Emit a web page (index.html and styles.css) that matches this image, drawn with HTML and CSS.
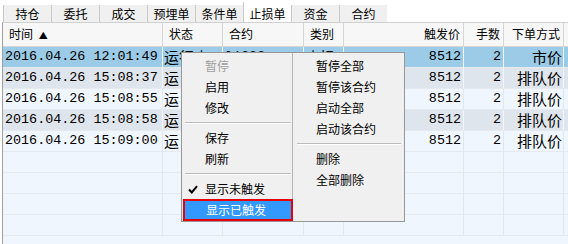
FILE: index.html
```html
<!DOCTYPE html>
<html lang="zh-CN">
<head>
  <meta charset="UTF-8">
  <link rel="stylesheet" href="styles.css">
  <title>止损单</title>
</head>
<body>
  <nav class="tabs">
    <div class="tab">持仓</div>
    <div class="tab">委托</div>
    <div class="tab">成交</div>
    <div class="tab">预埋单</div>
    <div class="tab">条件单</div>
    <div class="tab active">止损单</div>
    <div class="tab">资金</div>
    <div class="tab">合约</div>
  </nav>

  <div class="table">
    <div class="row head">
      <div class="cell">时间 <span class="sort">▲</span></div>
      <div class="cell">状态</div>
      <div class="cell">合约</div>
      <div class="cell">类别</div>
      <div class="cell num">触发价</div>
      <div class="cell num">手数</div>
      <div class="cell num">下单方式</div>
      <div class="cell"></div>
    </div>
    <div class="row selected">
      <div class="cell">2016.04.26 12:01:49</div>
      <div class="cell cjk">运行中</div>
      <div class="cell">l1609</div>
      <div class="cell cjk">止损</div>
      <div class="cell num">8512</div>
      <div class="cell num">2</div>
      <div class="cell num cjk">市价</div>
      <div class="cell"></div>
    </div>
    <div class="row even">
      <div class="cell">2016.04.26 15:08:37</div>
      <div class="cell cjk">运</div>
      <div class="cell"></div>
      <div class="cell"></div>
      <div class="cell num">8512</div>
      <div class="cell num">2</div>
      <div class="cell num cjk">排队价</div>
      <div class="cell"></div>
    </div>
    <div class="row">
      <div class="cell">2016.04.26 15:08:55</div>
      <div class="cell cjk">运</div>
      <div class="cell"></div>
      <div class="cell"></div>
      <div class="cell num">8512</div>
      <div class="cell num">2</div>
      <div class="cell num cjk">排队价</div>
      <div class="cell"></div>
    </div>
    <div class="row even">
      <div class="cell">2016.04.26 15:08:58</div>
      <div class="cell cjk">运</div>
      <div class="cell"></div>
      <div class="cell"></div>
      <div class="cell num">8512</div>
      <div class="cell num">2</div>
      <div class="cell num cjk">排队价</div>
      <div class="cell"></div>
    </div>
    <div class="row">
      <div class="cell">2016.04.26 15:09:00</div>
      <div class="cell cjk">运</div>
      <div class="cell"></div>
      <div class="cell"></div>
      <div class="cell num">8512</div>
      <div class="cell num">2</div>
      <div class="cell num cjk">排队价</div>
      <div class="cell"></div>
    </div>
    <div class="row empty"><div class="cell"></div><div class="cell"></div><div class="cell"></div><div class="cell"></div><div class="cell"></div><div class="cell"></div><div class="cell"></div><div class="cell"></div></div>
    <div class="row empty"><div class="cell"></div><div class="cell"></div><div class="cell"></div><div class="cell"></div><div class="cell"></div><div class="cell"></div><div class="cell"></div><div class="cell"></div></div>
    <div class="row empty"><div class="cell"></div><div class="cell"></div><div class="cell"></div><div class="cell"></div><div class="cell"></div><div class="cell"></div><div class="cell"></div><div class="cell"></div></div>
    <div class="row empty"><div class="cell"></div><div class="cell"></div><div class="cell"></div><div class="cell"></div><div class="cell"></div><div class="cell"></div><div class="cell"></div><div class="cell"></div></div>

    <!-- right-click menu -->
    <div class="menu">
      <div class="menu-col">
        <div class="item disabled">暂停</div>
        <div class="item">启用</div>
        <div class="item">修改</div>
        <div class="sep"></div>
        <div class="item">保存</div>
        <div class="item">刷新</div>
        <div class="sep"></div>
        <div class="item checked">
          <svg class="check" width="10" height="9" viewBox="0 0 10 9"><path d="M1 4.5 L3.8 7.5 L9 1.2" fill="none" stroke="#000" stroke-width="2"/></svg>
          显示未触发
        </div>
        <div class="item hot">显示已触发</div>
      </div>
      <div class="menu-col">
        <div class="item">暂停全部</div>
        <div class="item">暂停该合约</div>
        <div class="item">启动全部</div>
        <div class="item">启动该合约</div>
        <div class="sep"></div>
        <div class="item">删除</div>
        <div class="item">全部删除</div>
      </div>
    </div>
  </div>
</body>
</html>
```

FILE: styles.css
```css
body {
    margin: 0;
    width: 568px;
    height: 244px;
    overflow: hidden;
    background-color: #ffffff;
    font-family: "Noto Sans CJK SC", sans-serif;
    font-size: 12px;
    color: #000;
}

.tabs {
    display: flex;
    height: 22px;
    padding-left: 3px;
    background-color: #ffffff;
}

.tab {
    width: 47px;
    height: 17px;
    margin-top: 5px;
    line-height: 17px;
    text-align: center;
    background-color: #f0f0f0;
    border-left: 1px solid #c9c9c9;
}

.tab.active {
    height: 20px;
    margin-top: 2px;
    line-height: 23px;
    background-color: #ffffff;
}

.table {
    position: relative;
    margin-left: 2px;
    border-left: 1px solid #a0a0a0;
    border-top: 1px solid #d0d0d0;
    background-color: #f0f6fe;
    height: 221px;
    overflow: hidden;
}

.row {
    display: grid;
    grid-template-columns: 160px 60px 81px 40px 120px 40px 60px 1fr;
    height: 20px;
    border-bottom: 1px solid #e6e9ee;
    font-family: "Liberation Mono", "Noto Sans CJK SC", monospace;
    font-size: 13.4px;
    line-height: 20px;
    background-color: #f0f6fe;
}

.row .cell {
    padding: 0 2px;
    border-right: 1px solid #e3e7ed;
    white-space: nowrap;
    overflow: hidden;
}

.row .cell.num {
    text-align: right;
}

.row .cell.cjk {
    font-family: "Noto Sans CJK SC", sans-serif;
    font-size: 15px;
    padding: 0 1px;
}

.row.even {
    background-color: #dfe5ec;
}

.row.selected {
    background-color: #9ccbe7;
}

.row.selected .cell,
.row.even .cell {
    border-right-color: #f4f6f9;
}

.row.head {
    height: 23px;
    line-height: 22px;
    background-color: #f7f7f7;
    border-bottom: 1px solid #d5d5d5;
    font-family: "Noto Sans CJK SC", sans-serif;
    font-size: 12px;
}

.row.head .cell {
    padding: 0 6px;
    border-right: 1px solid #d5d5d5;
}

.row.head .cell.num {
    padding: 0 3px;
}

.sort {
    font-size: 9px;
    margin-left: 3px;
}

.menu {
    position: absolute;
    left: 178px;
    top: 29px;
    width: 222px;
    height: 168px;
    display: grid;
    grid-template-columns: 110px 1fr;
    background-color: #f0f0f0;
    border: 1px solid #979797;
    font-family: "Noto Sans CJK SC", sans-serif;
    font-size: 12px;
}

.menu-col {
    padding-top: 2px;
}

.menu-col + .menu-col {
    border-left: 1px solid #b5b5b5;
}

.item {
    position: relative;
    height: 21px;
    line-height: 21px;
    padding-left: 23px;
    white-space: nowrap;
}

.item.disabled {
    color: #a0a0a0;
}

.check {
    position: absolute;
    left: 6px;
    top: 7px;
}

.item.hot {
    margin: 0 -1px 0 1px;
    height: 18px;
    line-height: 18px;
    padding-left: 21px;
    background-color: #3399ff;
    color: #ffffff;
    border: 2px solid #e8000b;
}

.sep {
    height: 9px;
    margin: 0 1px 0 3px;
    box-sizing: border-box;
    border-top: 4px solid transparent;
}

.sep::after {
    content: "";
    display: block;
    height: 1px;
    background-color: #bcbcbc;
    border-bottom: 1px solid #ffffff;
}

.menu-col + .menu-col .sep {
    margin: 0 3px 0 4px;
}
```
